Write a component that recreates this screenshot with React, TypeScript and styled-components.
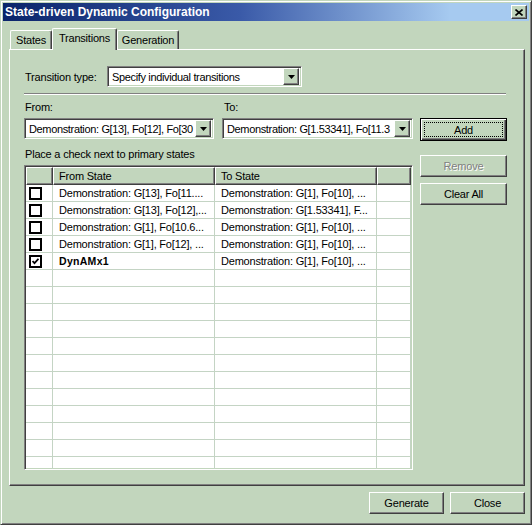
import styled, { createGlobalStyle, css } from "styled-components";

const face = "#c2d6bd";
const light = "#ffffff";
const shadow = "#808080";
const dark = "#404040";
const gridLine = "#c4d4c4";

const GlobalStyle = createGlobalStyle`
  html, body {
    margin: 0;
    padding: 0;
    background: ${face};
  }
  body {
    font-family: "Liberation Sans", Arial, sans-serif;
    font-size: 11px;
    letter-spacing: -0.2px;
    color: #000;
  }
`;

const raised = css`
  border-top: 1px solid ${light};
  border-left: 1px solid ${light};
  border-right: 1px solid ${dark};
  border-bottom: 1px solid ${dark};
  box-shadow: inset -1px -1px ${shadow};
`;

const sunken = css`
  border-top: 1px solid ${shadow};
  border-left: 1px solid ${shadow};
  border-right: 1px solid ${light};
  border-bottom: 1px solid ${light};
  box-shadow: inset 1px 1px ${dark}, inset -1px -1px ${face};
`;

const Window = styled.div`
  width: 532px;
  height: 525px;
  box-sizing: border-box;
  background: ${face};
  border-top: 1px solid ${face};
  border-left: 1px solid ${face};
  border-right: 1px solid ${dark};
  border-bottom: 1px solid ${dark};
  box-shadow: inset 1px 1px ${light}, inset -1px -1px ${shadow};
  padding: 2px;
  display: flex;
  flex-direction: column;
`;

const TitleBar = styled.div`
  height: 18px;
  display: flex;
  align-items: center;
  justify-content: space-between;
  padding: 0 2px;
  background: linear-gradient(to right, #0a246a 0%, #3a5aa8 45%, #a6caf0 85%);
`;

const TitleText = styled.span`
  color: #fff;
  font-weight: bold;
  font-size: 12px;
  letter-spacing: 0;
`;

const CloseBox = styled.div`
  width: 16px;
  height: 14px;
  box-sizing: border-box;
  background: ${face};
  ${raised};
  display: flex;
  align-items: center;
  justify-content: center;
`;

const Body = styled.div`
  flex: 1;
  display: flex;
  flex-direction: column;
  padding: 7px 4px 0 6px;
`;

const TabStrip = styled.div`
  height: 21px;
  display: flex;
  align-items: flex-end;
  padding-left: 1px;
`;

const Tab = styled.div<{ $w: number; $active?: boolean }>`
  width: ${p => p.$w}px;
  height: ${p => (p.$active ? 22 : 19)}px;
  box-sizing: border-box;
  margin-bottom: ${p => (p.$active ? -1 : 0)}px;
  position: relative;
  z-index: ${p => (p.$active ? 2 : 1)};
  background: ${face};
  border-top: 1px solid ${light};
  border-left: 1px solid ${light};
  border-right: 1px solid ${dark};
  border-radius: 2px 2px 0 0;
  box-shadow: inset -1px 0 ${shadow};
  display: flex;
  justify-content: center;
  padding-top: 3px;
`;

const Panel = styled.div`
  height: 437px;
  box-sizing: border-box;
  border-top: 1px solid ${light};
  border-left: 1px solid ${light};
  border-right: 1px solid ${dark};
  border-bottom: 1px solid ${dark};
  box-shadow: inset -1px -1px ${shadow};
  padding: 16px 15px 0 14px;
  display: flex;
  flex-direction: column;
`;

const TypeRow = styled.div`
  display: flex;
  align-items: center;
  height: 21px;
`;

const Label = styled.span<{ $w?: number }>`
  display: inline-block;
  width: ${p => (p.$w ? `${p.$w}px` : "auto")};
  padding-left: 1px;
  white-space: nowrap;
`;

const Combo = styled.div<{ $w: number }>`
  width: ${p => p.$w}px;
  height: 21px;
  box-sizing: border-box;
  background: #fff;
  ${sunken};
  display: flex;
  align-items: center;
  padding: 2px;
`;

const ComboText = styled.span`
  flex: 1;
  min-width: 0;
  overflow: hidden;
  white-space: nowrap;
  padding-left: 2px;
  letter-spacing: -0.35px;
`;

const DropButton = styled.div`
  width: 16px;
  height: 17px;
  flex: none;
  box-sizing: border-box;
  background: ${face};
  ${raised};
  display: flex;
  align-items: center;
  justify-content: center;
`;

const Separator = styled.div`
  width: 482px;
  margin-top: 6px;
  border-top: 1px solid ${shadow};
  border-bottom: 1px solid ${light};
`;

const FieldLabels = styled.div`
  display: flex;
  margin-top: 5px;
  height: 13px;
  align-items: center;
`;

const ComboRow = styled.div`
  display: flex;
  align-items: flex-start;
  gap: 8px;
  margin-top: 5px;
`;

const Button = styled.div<{ $w: number; $h: number; $default?: boolean; $disabled?: boolean }>`
  width: ${p => p.$w}px;
  height: ${p => p.$h}px;
  box-sizing: border-box;
  background: ${face};
  display: flex;
  align-items: center;
  justify-content: center;
  position: relative;
  color: ${p => (p.$disabled ? shadow : "#000")};
  text-shadow: ${p => (p.$disabled ? `1px 1px ${light}` : "none")};
  ${p =>
    p.$default
      ? css`
          border: 1px solid #000;
          box-shadow: inset 1px 1px ${light}, inset -1px -1px ${dark},
            inset -2px -2px ${shadow};
        `
      : raised};
`;

const FocusRing = styled.span`
  position: absolute;
  inset: 3px;
  border: 1px dotted #000;
`;

const Lower = styled.div`
  display: flex;
  gap: 7px;
`;

const LeftCol = styled.div`
  display: flex;
  flex-direction: column;
`;

const RightCol = styled.div`
  display: flex;
  flex-direction: column;
  gap: 6px;
  padding-top: 14px;
`;

const Hint = styled.div`
  margin-top: 7px;
  height: 13px;
  line-height: 13px;
  padding-left: 1px;
`;

const ListView = styled.div`
  margin-top: 4px;
  width: 389px;
  height: 305px;
  box-sizing: border-box;
  background: #fff;
  ${sunken};
  padding: 1px;
  overflow: hidden;
`;

const cols = "27px 162px 162px 1fr";

const HeaderRow = styled.div`
  display: grid;
  grid-template-columns: ${cols};
  height: 18px;
`;

const HeaderCell = styled.div`
  box-sizing: border-box;
  background: ${face};
  ${raised};
  padding-left: 5px;
  display: flex;
  align-items: center;
`;

const Row = styled.div`
  display: grid;
  grid-template-columns: ${cols};
  height: 17px;
  box-sizing: border-box;
  border-bottom: 1px solid ${gridLine};
`;

const Cell = styled.div<{ $bold?: boolean }>`
  box-sizing: border-box;
  border-right: 1px solid ${gridLine};
  padding-left: 6px;
  display: flex;
  align-items: center;
  white-space: nowrap;
  overflow: hidden;
  font-weight: ${p => (p.$bold ? "bold" : "normal")};
  letter-spacing: ${p => (p.$bold ? "0.3px" : "-0.2px")};
  font-size: ${p => (p.$bold ? "10.5px" : "11px")};
`;

const CheckCell = styled.div`
  box-sizing: border-box;
  border-right: 1px solid ${gridLine};
  padding-left: 3px;
  display: flex;
  align-items: center;
`;

const CheckBox = styled.div`
  width: 13px;
  height: 13px;
  box-sizing: border-box;
  border: 2px solid #000;
  background: #fff;
  display: flex;
  align-items: center;
  justify-content: center;
`;

const Footer = styled.div`
  display: flex;
  justify-content: flex-end;
  gap: 6px;
  margin-top: 6px;
`;

const rows: { checked: boolean; from: string; to: string; bold?: boolean }[] = [
  { checked: false, from: "Demonstration: G[13], Fo[11....", to: "Demonstration: G[1], Fo[10], ..." },
  { checked: false, from: "Demonstration: G[13], Fo[12],...", to: "Demonstration: G[1.53341], F..." },
  { checked: false, from: "Demonstration: G[1], Fo[10.6...", to: "Demonstration: G[1], Fo[10], ..." },
  { checked: false, from: "Demonstration: G[1], Fo[12], ...", to: "Demonstration: G[1], Fo[10], ..." },
  { checked: true, from: "DynAMx1", to: "Demonstration: G[1], Fo[10], ...", bold: true },
];

const emptyRows = Array.from({ length: 13 });

function Arrow() {
  return (
    <svg width="7" height="4" viewBox="0 0 7 4">
      <path d="M0 0h7L3.5 4z" fill="#000" />
    </svg>
  );
}

function ComboBox({ width, value }: { width: number; value: string }) {
  return (
    <Combo $w={width}>
      <ComboText>{value}</ComboText>
      <DropButton>
        <Arrow />
      </DropButton>
    </Combo>
  );
}

export default function App() {
  return (
    <>
      <GlobalStyle />
      <Window>
        <TitleBar>
          <TitleText>State-driven Dynamic Configuration</TitleText>
          <CloseBox>
            <svg width="8" height="7" viewBox="0 0 8 7">
              <path d="M0.5 0.5L7.5 6.5M7.5 0.5L0.5 6.5" stroke="#000" strokeWidth="1.6" />
            </svg>
          </CloseBox>
        </TitleBar>
        <Body>
          <TabStrip>
            <Tab $w={42}>States</Tab>
            <Tab $w={65} $active>
              Transitions
            </Tab>
            <Tab $w={62}>Generation</Tab>
          </TabStrip>
          <Panel>
            <TypeRow>
              <Label $w={82}>Transition type:</Label>
              <ComboBox width={195} value="Specify individual transitions" />
            </TypeRow>
            <Separator />
            <FieldLabels>
              <Label $w={198}>From:</Label>
              <Label>To:</Label>
            </FieldLabels>
            <ComboRow>
              <ComboBox width={190} value="Demonstration: G[13], Fo[12], Fo[30" />
              <ComboBox width={191} value="Demonstration: G[1.53341], Fo[11.3" />
              <Button $w={87} $h={23} $default style={{ marginLeft: -1 }}>
                <FocusRing />
                Add
              </Button>
            </ComboRow>
            <Lower>
              <LeftCol>
                <Hint>Place a check next to primary states</Hint>
                <ListView>
                  <HeaderRow>
                    <HeaderCell />
                    <HeaderCell>From State</HeaderCell>
                    <HeaderCell>To State</HeaderCell>
                    <HeaderCell />
                  </HeaderRow>
                  {rows.map((r, i) => (
                    <Row key={i}>
                      <CheckCell>
                        <CheckBox>
                          {r.checked && (
                            <svg width="7" height="7" viewBox="0 0 7 7">
                              <path d="M0.5 3L2.5 5.2L6.5 0.8" stroke="#000" strokeWidth="1.8" fill="none" />
                            </svg>
                          )}
                        </CheckBox>
                      </CheckCell>
                      <Cell $bold={r.bold}>{r.from}</Cell>
                      <Cell>{r.to}</Cell>
                      <Cell />
                    </Row>
                  ))}
                  {emptyRows.map((_, i) => (
                    <Row key={`e${i}`}>
                      <CheckCell />
                      <Cell />
                      <Cell />
                      <Cell />
                    </Row>
                  ))}
                </ListView>
              </LeftCol>
              <RightCol>
                <Button $w={87} $h={22} $disabled>
                  Remove
                </Button>
                <Button $w={87} $h={22}>
                  Clear All
                </Button>
              </RightCol>
            </Lower>
          </Panel>
          <Footer>
            <Button $w={75} $h={22}>
              Generate
            </Button>
            <Button $w={75} $h={22}>
              Close
            </Button>
          </Footer>
        </Body>
      </Window>
    </>
  );
}
